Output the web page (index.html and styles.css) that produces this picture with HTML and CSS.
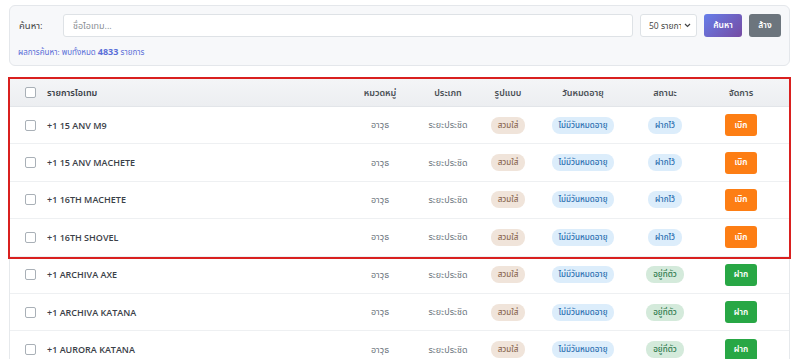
FILE: index.html
```html
<!DOCTYPE html>
<html>
<head>
	<meta charset="utf-8">
	<title>รายการไอเทม</title>
	<link rel="stylesheet" href="styles.css">
</head>
<body>
	<div class="search-card">
		<div class="search-row">
			<label class="search-label" for="search-input">ค้นหา:</label>
			<input type="text" id="search-input" class="search-input" placeholder="ชื่อไอเทม...">
			<div class="select-wrap">
				<select class="search-select">
					<option>50 รายการ</option>
				</select>
				<svg class="select-arrow" width="7" height="5" viewBox="0 0 7 5"><path d="M1 1l2.5 2.5L6 1" fill="none" stroke="#444" stroke-width="1.2"/></svg>
			</div>
			<button class="btn btn-search">ค้นหา</button>
			<button class="btn btn-clear">ล้าง</button>
		</div>
		<div class="search-result">ผลการค้นหา: พบทั้งหมด <b>4833</b> รายการ</div>
	</div>

	<div class="table-card" id="item-table">
		<div class="highlight">
			<div class="row row-head">
				<div class="cell cell-check"><span class="check"></span></div>
				<div class="cell cell-name">รายการไอเทม</div>
				<div class="cell">หมวดหมู่</div>
				<div class="cell">ประเภท</div>
				<div class="cell">รูปแบบ</div>
				<div class="cell">วันหมดอายุ</div>
				<div class="cell">สถานะ</div>
				<div class="cell">จัดการ</div>
			</div>
		</div>
	</div>

	<script>
		// rows of the item list
		const items = [
			['+1 15 ANV M9', 'stored'],
			['+1 15 ANV MACHETE', 'stored'],
			['+1 16TH MACHETE', 'stored'],
			['+1 16TH SHOVEL', 'stored'],
			['+1 ARCHIVA AXE', 'held'],
			['+1 ARCHIVA KATANA', 'held'],
			['+1 AURORA KATANA', 'held']
		];

		const table = document.getElementById('item-table');
		const highlight = table.querySelector('.highlight');

		items.forEach(function (item, i) {
			const stored = item[1] === 'stored';
			const rowHTML = `
				<div class="row">
					<div class="cell cell-check"><span class="check"></span></div>
					<div class="cell cell-name">${item[0]}</div>
					<div class="cell cell-muted">อาวุธ</div>
					<div class="cell cell-muted">ระยะประชิด</div>
					<div class="cell"><span class="badge badge-wear">สวมใส่</span></div>
					<div class="cell"><span class="badge badge-blue">ไม่มีวันหมดอายุ</span></div>
					<div class="cell">${stored
						? '<span class="badge badge-blue">ฝากไว้</span>'
						: '<span class="badge badge-green">อยู่ที่ตัว</span>'}</div>
					<div class="cell">${stored
						? '<button class="btn btn-take">เบิก</button>'
						: '<button class="btn btn-store">ฝาก</button>'}</div>
				</div>`;
			if (i < 4) {
				highlight.innerHTML += rowHTML;
			} else {
				table.innerHTML += rowHTML;
			}
		});
	</script>
</body>
</html>
```

FILE: styles.css
```css
body {
	margin: 0;
	padding: 5px 10px 0 9px;
	background: #fff;
	font-family: "Open Sans", "Noto Sans", "Noto Sans Thai", sans-serif;
	font-size: 9px;
	color: #343a40;
}

/* search box */
.search-card {
	height: 61px;
	box-sizing: border-box;
	padding: 8px 8px 0 8px;
	background: #f7f8fa;
	border: 1px solid #e4e7eb;
	border-radius: 6px;
}
.search-row {
	display: flex;
	align-items: center;
	gap: 7px;
}
.search-label {
	width: 37px;
	padding-left: 1px;
	font-size: 9.5px;
	color: #444;
}
.search-input {
	flex: 1;
	height: 23px;
	box-sizing: border-box;
	border: 1px solid #dee2e6;
	border-radius: 3px;
	padding: 0 9px;
	font-family: inherit;
	font-size: 9px;
	background: #fff;
}
.search-input::placeholder {
	color: #8a8f95;
}
.select-wrap {
	position: relative;
	width: 57px;
	height: 23px;
}
.search-select {
	appearance: none;
	width: 100%;
	height: 100%;
	box-sizing: border-box;
	border: 1px solid #dee2e6;
	border-radius: 3px;
	padding: 0 15px 0 8px;
	font-family: inherit;
	font-size: 8.5px;
	color: #444;
	background: #fff;
	overflow: hidden;
}
.select-arrow {
	position: absolute;
	right: 6px;
	top: 9px;
	pointer-events: none;
}
.search-result {
	margin-top: 8px;
	font-size: 8px;
	color: #5b6fd8;
}
.search-result b {
	font-size: 9px;
}

/* buttons */
.btn {
	border: none;
	border-radius: 3px;
	color: #fff;
	font-family: inherit;
	font-size: 8.5px;
	font-weight: 600;
	cursor: pointer;
	padding: 0;
}
.btn-search {
	width: 38px;
	height: 23px;
	background: linear-gradient(135deg, #667eea, #764ba2);
}
.btn-clear {
	width: 32px;
	height: 23px;
	background: #6c757d;
}
.btn-take {
	width: 32px;
	height: 22px;
	background: #fd7e14;
}
.btn-store {
	width: 32px;
	height: 22px;
	background: #28a745;
}

/* table */
.table-card {
	margin-top: 12px;
	border: 1px solid #e6e9ec;
	border-radius: 6px;
	background: #fff;
}
.highlight {
	outline: 2px solid #d9201f;
	outline-offset: 0;
}
.row {
	display: grid;
	grid-template-columns: 37px 298px 70px 66px 54px 96px 68px 84px;
	height: 37.4px;
	box-sizing: border-box;
	padding-right: 6px;
	border-bottom: 1px solid #eef0f2;
	align-items: center;
}
.row-head {
	height: 28px;
	background: linear-gradient(#f4f5f7, #eceef1);
	border-bottom: 1px solid #e2e5e9;
	font-weight: 600;
	color: #4a5056;
}
.cell {
	text-align: center;
	white-space: nowrap;
}
.cell-check {
	text-align: left;
	padding-left: 15px;
	display: flex;
	align-items: center;
}
.cell-name {
	text-align: left;
	font-weight: 600;
	color: #3a4047;
}
.cell-muted {
	color: #6c757d;
}
.check {
	display: inline-block;
	width: 11px;
	height: 11px;
	box-sizing: border-box;
	border: 1px solid #a9b0b7;
	border-radius: 2px;
	background: #fff;
}

/* badges */
.badge {
	display: inline-block;
	padding: 2px 7px;
	border-radius: 8px;
	font-size: 8px;
	font-weight: 500;
}
.badge-wear {
	background: #f0e4da;
	color: #8c6a55;
}
.badge-blue {
	background: #dcedfb;
	color: #2a6db0;
}
.badge-green {
	background: #d4eadb;
	color: #2f7a4e;
}
```
